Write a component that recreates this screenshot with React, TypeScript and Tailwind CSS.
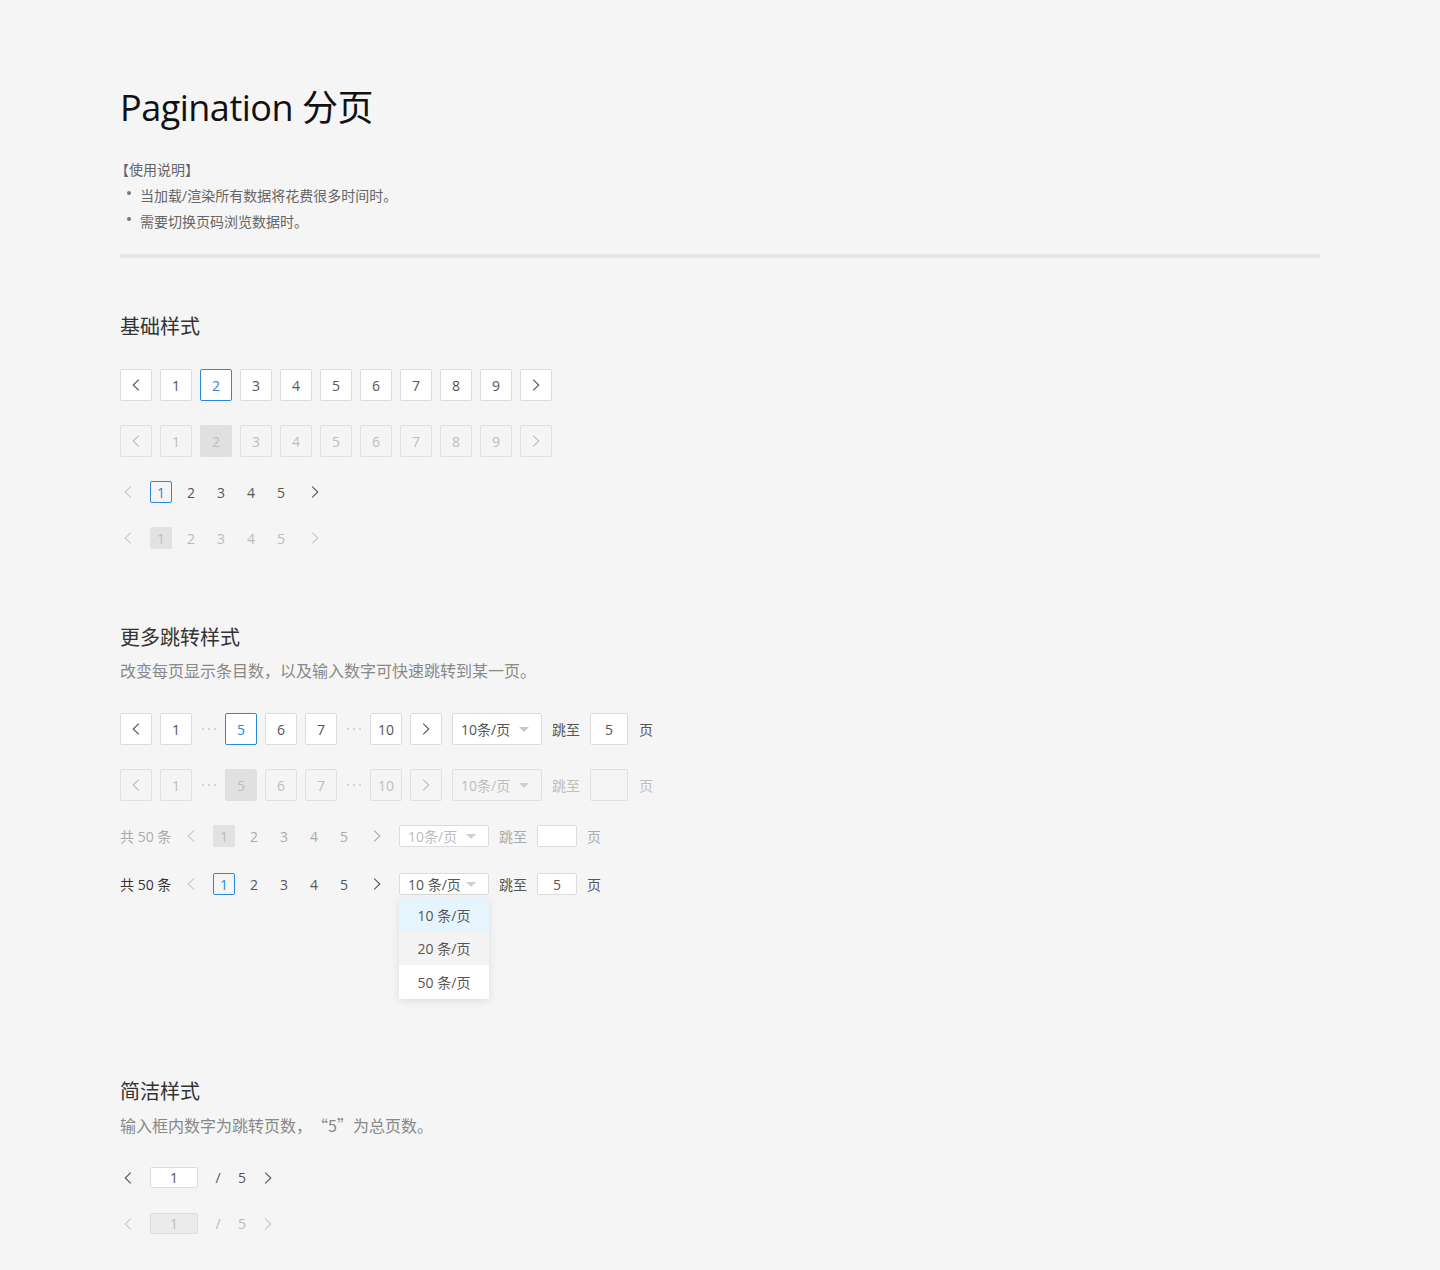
import React from "react";
import clsx from "clsx";

type Dir = "left" | "right";

const Chevron = ({ dir = "left", className = "" }: { dir?: Dir; className?: string }) => (
  <svg width="8" height="12" viewBox="0 0 8 12" fill="none" className={className}>
    <path
      d={dir === "left" ? "M6.8 0.6 1.2 6 6.8 11.4" : "M1.2 0.6 6.8 6 1.2 11.4"}
      stroke="currentColor"
      strokeWidth="1.1"
    />
  </svg>
);

const Caret = ({ className = "" }: { className?: string }) => (
  <svg width="10" height="5" viewBox="0 0 10 5" className={className}>
    <path d="M0 0h10L5 5z" fill="currentColor" />
  </svg>
);

type State = "normal" | "active" | "disabled" | "disabledActive";

const Box = ({ children, state = "normal" }: { children: React.ReactNode; state?: State }) => (
  <div
    className={clsx(
      "flex h-8 w-8 shrink-0 items-center justify-center rounded-[2px] border text-[14px]",
      state === "normal" && "border-[#dcdcdc] bg-white text-[#555]",
      state === "active" && "border-[#2b88d8] bg-white text-[#2b88d8]",
      state === "disabled" && "border-[#e0e0e0] text-[#bdbdbd]",
      state === "disabledActive" && "border-[#e0e0e0] bg-[#e0e0e0] text-[#bdbdbd]"
    )}
  >
    {children}
  </div>
);

const Item = ({ children, state = "normal" }: { children: React.ReactNode; state?: State }) => (
  <div
    className={clsx(
      "flex h-[22px] w-[22px] shrink-0 items-center justify-center rounded-[2px] border text-[14px]",
      state === "normal" && "border-transparent text-[#555]",
      state === "active" && "border-[#2b88d8] text-[#2b88d8]",
      state === "disabled" && "border-transparent text-[#bbb]",
      state === "disabledActive" && "border-[#e2e2e2] bg-[#e2e2e2] text-[#bbb]"
    )}
  >
    {children}
  </div>
);

const Dots = () => (
  <div className="flex w-[17px] shrink-0 items-center justify-center gap-[4px] text-[#c8c8c8]">
    <span className="h-[2px] w-[2px] shrink-0 rounded-full bg-current" />
    <span className="h-[2px] w-[2px] shrink-0 rounded-full bg-current" />
    <span className="h-[2px] w-[2px] shrink-0 rounded-full bg-current" />
  </div>
);

const BasicRow = ({ disabled }: { disabled?: boolean }) => {
  const pages = [1, 2, 3, 4, 5, 6, 7, 8, 9];
  return (
    <div className="flex items-center gap-2">
      <Box state={disabled ? "disabled" : "normal"}>
        <Chevron dir="left" />
      </Box>
      {pages.map((p) => (
        <Box
          key={p}
          state={p === 2 ? (disabled ? "disabledActive" : "active") : disabled ? "disabled" : "normal"}
        >
          {p}
        </Box>
      ))}
      <Box state={disabled ? "disabled" : "normal"}>
        <Chevron dir="right" />
      </Box>
    </div>
  );
};

const SmallRow = ({ disabled }: { disabled?: boolean }) => (
  <div className="flex h-[22px] items-center">
    <div className="mr-[14px] flex w-4 justify-center text-[#c8c8c8]">
      <Chevron dir="left" />
    </div>
    <div className="flex items-center gap-2">
      {[1, 2, 3, 4, 5].map((p) => (
        <Item
          key={p}
          state={p === 1 ? (disabled ? "disabledActive" : "active") : disabled ? "disabled" : "normal"}
        >
          {p}
        </Item>
      ))}
    </div>
    <div className={clsx("ml-[15px] flex w-4 justify-center", disabled ? "text-[#c8c8c8]" : "text-[#555]")}>
      <Chevron dir="right" />
    </div>
  </div>
);

const JumpRow = ({ disabled }: { disabled?: boolean }) => {
  const s = (n: number): State => (disabled ? (n === 5 ? "disabledActive" : "disabled") : n === 5 ? "active" : "normal");
  return (
    <div className="flex items-center">
      <div className="flex items-center gap-2">
        <Box state={disabled ? "disabled" : "normal"}>
          <Chevron dir="left" />
        </Box>
        <Box state={s(1)}>1</Box>
        <Dots />
        <Box state={s(5)}>5</Box>
        <Box state={s(6)}>6</Box>
        <Box state={s(7)}>7</Box>
        <Dots />
        <Box state={s(10)}>10</Box>
        <Box state={disabled ? "disabled" : "normal"}>
          <Chevron dir="right" />
        </Box>
      </div>
      <div
        className={clsx(
          "ml-[10px] flex h-8 w-[90px] items-center justify-between rounded-[2px] border pl-2 pr-3 text-[14px]",
          disabled ? "border-[#e0e0e0] text-[#bdbdbd]" : "border-[#dcdcdc] bg-white text-[#555]"
        )}
      >
        <span>10条/页</span>
        <Caret className={disabled ? "text-[#cfcfcf]" : "text-[#c8c8c8]"} />
      </div>
      <span className={clsx("ml-[10px] text-[14px]", disabled ? "text-[#bdbdbd]" : "text-[#555]")}>跳至</span>
      <div
        className={clsx(
          "ml-[10px] flex h-8 w-[38px] items-center justify-center rounded-[2px] border text-[14px]",
          disabled ? "border-[#e0e0e0]" : "border-[#dcdcdc] bg-white text-[#555]"
        )}
      >
        {disabled ? "" : "5"}
      </div>
      <span className={clsx("ml-[11px] text-[14px]", disabled ? "text-[#bdbdbd]" : "text-[#555]")}>页</span>
    </div>
  );
};

const TotalRow = ({ muted, open }: { muted?: boolean; open?: boolean }) => {
  const txt = muted ? "text-[#aaa]" : "text-[#555]";
  return (
    <div className="flex h-[22px] items-center text-[14px]">
      <span className={clsx("w-[53px]", muted ? "text-[#aaa]" : "text-[#333]")}>共 50 条</span>
      <div className="ml-[10px] mr-[14px] flex w-4 justify-center text-[#c8c8c8]">
        <Chevron dir="left" />
      </div>
      <div className="flex items-center gap-2">
        {[1, 2, 3, 4, 5].map((p) => (
          <div
            key={p}
            className={clsx(
              "flex h-[22px] w-[22px] items-center justify-center rounded-[2px] border",
              p === 1
                ? muted
                  ? "border-[#e2e2e2] bg-[#e2e2e2] text-[#bbb]"
                  : "border-[#2b88d8] text-[#2b88d8]"
                : clsx("border-transparent", txt)
            )}
          >
            {p}
          </div>
        ))}
      </div>
      <div className={clsx("ml-[14px] flex w-4 justify-center", muted ? "text-[#aaa]" : "text-[#555]")}>
        <Chevron dir="right" />
      </div>
      <div className="relative ml-[14px]">
        <div
          className={clsx(
            "flex h-[22px] w-[90px] items-center justify-between rounded-[2px] border border-[#dcdcdc] bg-white pl-2 pr-3",
            muted ? "text-[#bbb]" : "text-[#555]"
          )}
        >
          <span>{muted ? "10条/页" : "10 条/页"}</span>
          <Caret className="text-[#cfcfcf]" />
        </div>
        {open && (
          <div className="absolute left-0 top-[25px] z-10 w-[90px] overflow-hidden rounded-[2px] bg-white text-[14px] text-[#555] shadow-[0_2px_10px_rgba(0,0,0,0.1)]">
            <div className="flex h-[34px] items-center justify-center bg-[#e6f5fd]">10 条/页</div>
            <div className="flex h-[33px] items-center justify-center bg-[#f4f4f4]">20 条/页</div>
            <div className="flex h-[34px] items-center justify-center bg-white">50 条/页</div>
          </div>
        )}
      </div>
      <span className={clsx("ml-[10px]", txt)}>跳至</span>
      <div className="ml-[10px] flex h-[22px] w-10 items-center justify-center rounded-[2px] border border-[#dcdcdc] bg-white text-[#555]">
        {muted ? "" : "5"}
      </div>
      <span className={clsx("ml-[10px]", txt)}>页</span>
    </div>
  );
};

const SimpleRow = ({ disabled }: { disabled?: boolean }) => (
  <div className="flex h-[21px] items-center text-[14px]">
    <div className={clsx("flex w-4 justify-center", disabled ? "text-[#c8c8c8]" : "text-[#555]")}>
      <Chevron dir="left" />
    </div>
    <div
      className={clsx(
        "ml-[14px] flex h-[21px] w-12 items-center justify-center rounded-[2px] border",
        disabled ? "border-[#dcdcdc] bg-[#ebebeb] text-[#bbb]" : "border-[#dcdcdc] bg-white text-[#555]"
      )}
    >
      1
    </div>
    <span className={clsx("ml-3 w-4 text-center", disabled ? "text-[#bbb]" : "text-[#555]")}>/</span>
    <span className={clsx("ml-2 w-4 text-center", disabled ? "text-[#bbb]" : "text-[#555]")}>5</span>
    <div className={clsx("ml-[10px] flex w-4 justify-center", disabled ? "text-[#c8c8c8]" : "text-[#555]")}>
      <Chevron dir="right" />
    </div>
  </div>
);

const Heading = ({ children, className = "" }: { children: React.ReactNode; className?: string }) => (
  <h2 className={clsx("text-[20px] leading-[28px] text-[#333]", className)}>{children}</h2>
);

const Desc = ({ children }: { children: React.ReactNode }) => (
  <p className="mt-[7px] text-[16px] leading-[24px] text-[#888]">{children}</p>
);

export default function App() {
  return (
    <div className="min-h-screen bg-[#f5f5f5] px-[120px] pb-10 pt-[84px] font-['Open_Sans','Noto_Sans_CJK_SC',sans-serif]">
      <h1 className="text-[36px] leading-[48px] tracking-[-0.5px] text-[#111]">Pagination 分页</h1>
      <div className="mt-[25px] text-[14px] leading-[26px] text-[#666]">
        <p className="-ml-[5px]">【使用说明】</p>
        {["当加载/渲染所有数据将花费很多时间时。", "需要切换页码浏览数据时。"].map((t) => (
          <div key={t} className="flex items-start">
            <span className="ml-[7px] mt-[8px] h-[4px] w-[4px] rounded-full bg-[#777]" />
            <span className="ml-[9px]">{t}</span>
          </div>
        ))}
      </div>
      <div className="mt-[19px] h-1 bg-[#e6e6e6]" />

      <Heading className="mt-[55px]">基础样式</Heading>
      <div className="mt-7 flex flex-col gap-6">
        <BasicRow />
        <BasicRow disabled />
        <SmallRow />
        <SmallRow disabled />
      </div>

      <Heading className="mt-[75px]">更多跳转样式</Heading>
      <Desc>改变每页显示条目数，以及输入数字可快速跳转到某一页。</Desc>
      <div className="mt-[30px] flex flex-col gap-6">
        <JumpRow />
        <JumpRow disabled />
      </div>
      <div className="mt-[24px] flex flex-col gap-[26px]">
        <TotalRow muted />
        <TotalRow open />
      </div>

      <Heading className="mt-[183px]">简洁样式</Heading>
      <Desc>
        输入框内数字为跳转页数，
        <span className="ml-[8px] font-['Noto_Sans_CJK_SC',sans-serif]">“5”</span>为总页数。
      </Desc>
      <div className="mt-[29px] flex flex-col gap-[25px]">
        <SimpleRow />
        <SimpleRow disabled />
      </div>
    </div>
  );
}
